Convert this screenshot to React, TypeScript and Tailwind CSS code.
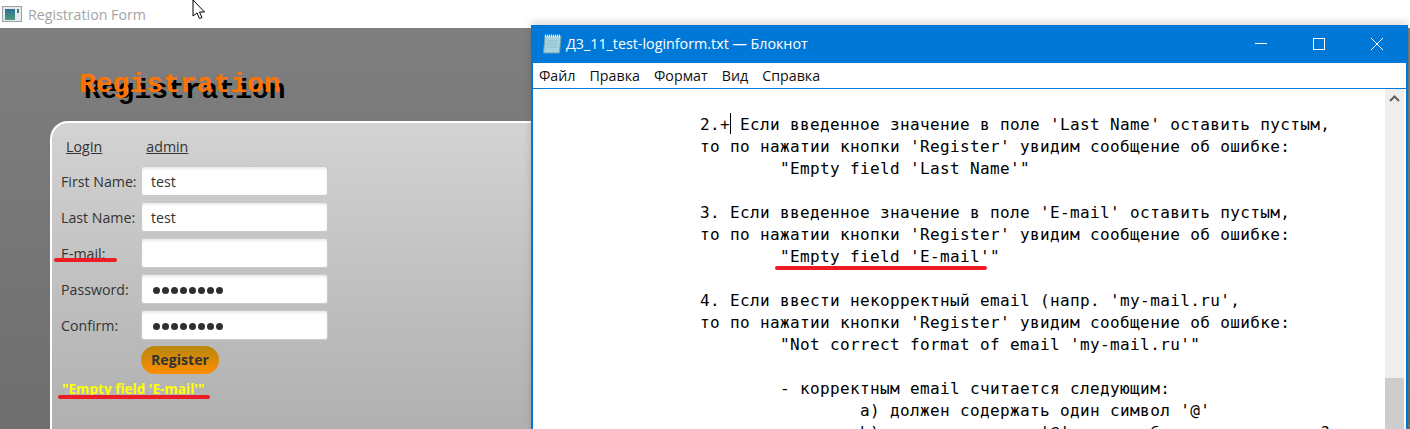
const fields = [
  { label: 'First Name:', value: 'test' },
  { label: 'Last Name:', value: 'test' },
  { label: 'E-mail:', value: '' },
  { label: 'Password:', dots: true },
  { label: 'Confirm:', dots: true },
]

const dots = [0, 1, 2, 3, 4, 5, 6, 7]

const noteLines = [
  '2.+ Если введенное значение в поле \'Last Name\' оставить пустым,',
  'то по нажатии кнопки \'Register\' увидим сообщение об ошибке:',
  '        "Empty field \'Last Name\'"',
  '',
  '3. Если введенное значение в поле \'E-mail\' оставить пустым,',
  'то по нажатии кнопки \'Register\' увидим сообщение об ошибке:',
  '        "Empty field \'E-mail\'"',
  '',
  '4. Если ввести некорректный email (напр. \'my-mail.ru\',',
  'то по нажатии кнопки \'Register\' увидим сообщение об ошибке:',
  '        "Not correct format of email \'my-mail.ru\'"',
  '',
  '        - корректным email считается следующим:',
  '                a) должен содержать один символ \'@\'',
  '                b) перед символом \'@\' должно быть как минимум ?',
]

function RegistrationApp() {
  return (
    <div className="w-full h-[429px] flex flex-col font-['Open_Sans',sans-serif]">
      {/* Title bar */}
      <div className="h-7 shrink-0 bg-white flex items-center gap-1.5 pl-0.5">
        <svg width="20" height="17" viewBox="0 0 20 17">
          <defs>
            <linearGradient id="appIcon" x1="0" y1="0" x2="0" y2="1">
              <stop offset="0" stopColor="#2c6f9a" />
              <stop offset="1" stopColor="#4f9a78" />
            </linearGradient>
          </defs>
          <rect x="0.500" y="0.500" width="19" height="15" fill="#e6eaec" stroke="#9aa3a8" />
          <rect x="3" y="3" width="10" height="11" fill="url(#appIcon)" />
          <rect x="15" y="3" width="2" height="4" fill="#3b7f8f" />
        </svg>
        <span className="pt-px text-[14.200px] text-[#a3a3a3]">Registration Form</span>
      </div>

      {/* Scene */}
      <div className="flex-1 bg-gradient-to-b from-[#7f7f7f] to-[#6e6e6e] pl-[50px] pt-[93px] relative">
        <h1 className="absolute left-[79px] top-[41px] font-['Liberation_Mono',monospace] text-[28px] leading-[32px] font-bold text-[#ff7300] [text-shadow:5px_6px_0_#000]">
          Registration
        </h1>
        <div className="w-[500px] h-[308px] rounded-tl-[18px] border-l-2 border-t-2 border-white bg-gradient-to-b from-[#d3d3d3] to-[#b0b0b0] pl-[14px] pt-[14px]">
          <div className="flex gap-[44px] text-[14.200px] leading-5 text-[#333]">
            <span className="underline">LogIn</span>
            <span className="underline">admin</span>
          </div>
          <div className="mt-[9px] flex flex-col gap-1.5 -ml-[5px]">
            {fields.map((f) => (
              <div key={f.label} className="flex items-center">
                <span className="w-[80px] pt-px text-[14.200px] text-[#333]">{f.label}</span>
                <div className="w-[187px] h-[30px] rounded-[3px] bg-white border border-[#c9c9c9] shadow-[inset_0_2px_2px_rgba(0,0,0,0.08)] pl-[9px] pt-px flex items-center text-[14.200px] text-[#333]">
                  {f.dots ? (
                    <div className="flex gap-[2px] pl-[2px] pt-[2px]">
                      {dots.map((d) => (
                        <span key={d} className="w-[7px] h-[7px] rounded-full bg-[#2f2f2f]" />
                      ))}
                    </div>
                  ) : (
                    f.value
                  )}
                </div>
              </div>
            ))}
          </div>
          <div className="ml-[75px] mt-1.5 w-[78px] h-7 rounded-[14px] bg-gradient-to-b from-[#b8860b] to-[#ff8c00] flex items-center justify-center text-[14.200px] font-bold text-[#333]">
            Register
          </div>
          <div className="mt-[5px] -ml-1 text-[13.600px] leading-5 font-bold text-[#ffff00]">
            "Empty field 'E-mail'"
          </div>
        </div>
      </div>
    </div>
  )
}

function Notepad() {
  return (
    <div className="absolute left-[531px] top-[25px] w-[877px] h-[404px] flex flex-col border-x-2 border-[#0078d7] bg-white shadow-[0_-3px_8px_rgba(0,0,0,0.15)]">
      <div className="h-[38px] shrink-0 bg-[#0078d7] flex items-center text-white">
        <svg className="ml-[9px]" width="20" height="20" viewBox="0 0 20 20">
          <path d="M3 2h16l-1.500 17H1.500z" fill="#a9d2df" stroke="#6d9fb3" />
          <path d="M3 2h16" stroke="#e8eef0" strokeWidth="3" strokeDasharray="1 1" />
          <path d="M5 7h11M4.500 10h11M4.500 13h11" stroke="#8fbccd" />
        </svg>
        <span className="ml-[4px] text-[14.300px] font-['Open_Sans',sans-serif]">Д3_11_test-loginform.txt — Блокнот</span>
        <div className="ml-auto mr-[6px] flex items-center gap-[12px]">
          <svg width="46" height="38" viewBox="0 0 46 38"><path d="M17 18.500h12" stroke="#fff" /></svg>
          <svg width="46" height="38" viewBox="0 0 46 38"><rect x="17.500" y="13.500" width="11" height="11" fill="none" stroke="#fff" /></svg>
          <svg width="46" height="38" viewBox="0 0 46 38"><path d="M17 13l12 12M29 13L17 25" stroke="#fff" /></svg>
        </div>
      </div>
      <div className="h-[25px] shrink-0 flex items-center gap-[14px] pl-[6px] text-[14.250px] text-[#111] font-['Open_Sans',sans-serif]">
        <span>Файл</span><span>Правка</span><span>Формат</span><span>Вид</span><span>Справка</span>
      </div>
      <div className="flex-1 min-h-0 flex border-t border-[#0078d7]">
        <pre className="flex-1 overflow-hidden pl-[167px] pt-[25px] font-['DejaVu_Sans_Mono',monospace] text-[16px] tracking-[0.370px] leading-[22px] text-black">
          {noteLines.join('\n')}
        </pre>
        <div className="w-[19px] mr-0.5 bg-[#eeeeee] flex flex-col">
          <svg width="19" height="20" viewBox="0 0 19 20"><path d="M5 12l4.500-4.500L14 12" fill="none" stroke="#606060" strokeWidth="2" /></svg>
          <div className="mt-auto h-[51px] bg-[#cdcdcd]" />
        </div>
      </div>
    </div>
  )
}

export default function App() {
  return (
    <div className="relative w-[1410px] h-[429px] overflow-hidden bg-white">
      <RegistrationApp />
      <Notepad />
      {/* text caret */}
      <div className="absolute left-[730px] top-[113px] w-px h-[21px] bg-black" />
      {/* cursor */}
      <svg className="absolute left-[192px] top-0" width="14" height="20" viewBox="0 0 14 20">
        <path d="M1 0v16l4-3 2.500 5.500 2.500-1L7.500 12H12.500z" fill="#fff" stroke="#000" />
      </svg>
      {/* red marker lines */}
      <div className="absolute left-[54px] top-[258px] w-[63px] h-1 rounded-full bg-[#ed1c24]" />
      <div className="absolute left-[58px] top-[395px] w-[152px] h-1 rounded-full bg-[#ed1c24]" />
      <div className="absolute left-[775px] top-[266px] w-[212px] h-1 rounded-full bg-[#ed1c24]" />
    </div>
  )
}
